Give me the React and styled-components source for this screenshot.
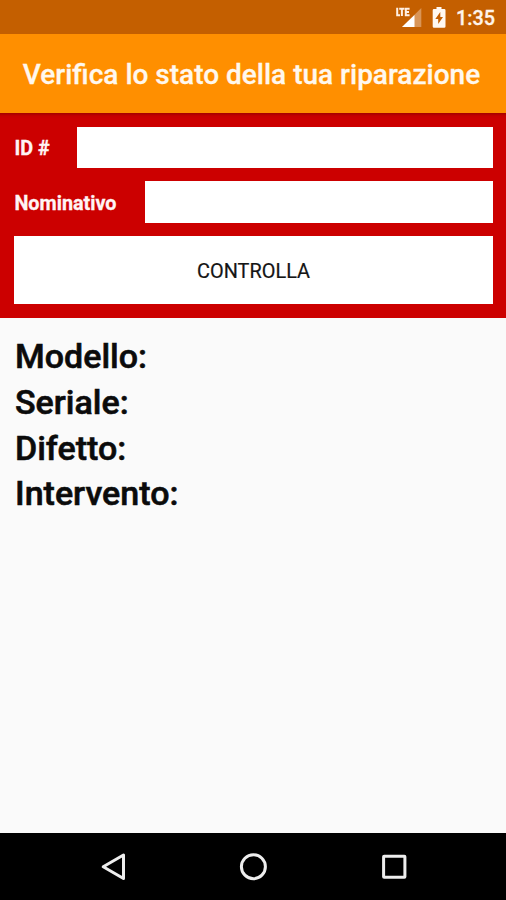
import React from "react";
import styled, { createGlobalStyle } from "styled-components";

const GlobalStyle = createGlobalStyle`
  *, *::before, *::after { box-sizing: border-box; }
  body { margin: 0; font-family: Roboto, sans-serif; }
`;

const Screen = styled.div`
  display: flex;
  flex-direction: column;
  height: 900px;
  background: #fafafa;
  overflow: hidden;
`;

const StatusBar = styled.div`
  display: flex;
  align-items: center;
  justify-content: flex-end;
  height: 34px;
  flex: none;
  padding-right: 11px;
  background: #c45f00;
  color: #fff4ea;
`;

const SignalIcon = styled.svg`
  width: 28px;
  height: 34px;
  margin-right: 9px;
`;

const BatteryIcon = styled.svg`
  width: 14px;
  height: 34px;
  margin-right: 10px;
`;

const Clock = styled.span`
  width: 39px;
  font-size: 19.8px;
  font-weight: 500;
  line-height: 34px;
  padding-top: 3px;
  white-space: nowrap;
  -webkit-text-stroke: 0.3px;
`;

const AppBar = styled.header`
  display: flex;
  align-items: center;
  justify-content: center;
  height: 79px;
  flex: none;
  padding-right: 3px;
  background: #ff8f00;
`;

const Title = styled.h1`
  margin: 0;
  padding-top: 2px;
  color: #fff8ee;
  font-size: 28px;
  font-weight: 500;
  white-space: nowrap;
  -webkit-text-stroke: 0.3px;
`;

const Form = styled.form`
  display: flex;
  flex-direction: column;
  gap: 13.3px;
  height: 205px;
  flex: none;
  padding: 13.7px 13.3px 0 14.4px;
  background: linear-gradient(#a30000, #c60000 3px, #cc0000 6px);
`;

const FieldRow = styled.label`
  display: flex;
  align-items: center;
  height: 41.4px;
`;

const FieldName = styled.span`
  width: ${(p) => p.$width}px;
  flex: none;
  padding-top: 3px;
  color: #fff4f4;
  font-size: 19.8px;
  font-weight: 700;
  -webkit-text-stroke: 0.3px;
`;

const Input = styled.input`
  flex: 1;
  min-width: 0;
  height: 100%;
  padding: 0 8px;
  border: 0;
  border-radius: 0;
  outline: 0;
  background: #fff;
  font: 400 19px Roboto, sans-serif;
`;

const Button = styled.button`
  height: 68px;
  padding: 2px 0 0;
  border: 0;
  background: #fff;
  color: #151515;
  font: 400 19.9px Roboto, sans-serif;
  -webkit-text-stroke: 0.2px;
`;

const Details = styled.main`
  flex: 1;
  padding: 16.4px 15px;
`;

const Detail = styled.p`
  margin: 0;
  color: #0b0b0b;
  font-size: 34px;
  font-weight: 500;
  line-height: 45.6px;
  -webkit-text-stroke: 0.6px;
`;

const NavBar = styled.nav`
  display: grid;
  grid-template-columns: repeat(3, 140.5px);
  justify-content: center;
  justify-items: center;
  height: 67px;
  flex: none;
  background: #000;
`;

const NavIcon = styled.svg`
  width: 40px;
  height: 67px;
  fill: none;
  stroke: #eee;
  stroke-width: 3;
  stroke-linejoin: round;
`;

const details = ["Modello:", "Seriale:", "Difetto:", "Intervento:"];

export default function App() {
  return (
    <Screen>
      <GlobalStyle />
      <StatusBar>
        <SignalIcon viewBox="0 0 28 34" fill="none">
          <path d="M26.3 8V27H7Z" fill="#d99557" />
          <path d="M19.5 15V27H7Z" fill="#fff" />
          <path d="M2.2 7.8V15.2H5M4.2 8.7H9.4M6.9 8.7V16M14.6 8.7H10.8V15.2H14.6M10.8 12H14" stroke="#fff0e3" strokeWidth="2" />
        </SignalIcon>
        <BatteryIcon viewBox="0 0 14 34">
          <path d="M4.5 7H9.5V9H12.2Q13.5 9 13.5 10.3V26.4Q13.5 27.7 12.2 27.7H2Q.7 27.7 .7 26.4V10.3Q.7 9 2 9H4.5Z" fill="#fff8f0" />
          <path d="M8.3 12L3.3 18.9H6.2V24L11 16.9H8.3Z" fill="#c45f00" />
        </BatteryIcon>
        <Clock>1:35</Clock>
      </StatusBar>
      <AppBar>
        <Title>Verifica lo stato della tua riparazione</Title>
      </AppBar>
      <Form onSubmit={(e) => e.preventDefault()}>
        <FieldRow>
          <FieldName $width={62.4}>ID #</FieldName>
          <Input />
        </FieldRow>
        <FieldRow>
          <FieldName $width={130.4}>Nominativo</FieldName>
          <Input />
        </FieldRow>
        <Button>CONTROLLA</Button>
      </Form>
      <Details>
        {details.map((name) => (
          <Detail key={name}>{name}</Detail>
        ))}
      </Details>
      <NavBar>
        <NavIcon viewBox="0 0 40 67">
          <path d="M30.5 22V45.5L10.2 33.7Z" />
        </NavIcon>
        <NavIcon viewBox="0 0 40 67">
          <circle cx="20.4" cy="33.7" r="12" />
        </NavIcon>
        <NavIcon viewBox="0 0 40 67">
          <rect x="9.6" y="23.2" width="21.3" height="21" rx=".5" />
        </NavIcon>
      </NavBar>
    </Screen>
  );
}
